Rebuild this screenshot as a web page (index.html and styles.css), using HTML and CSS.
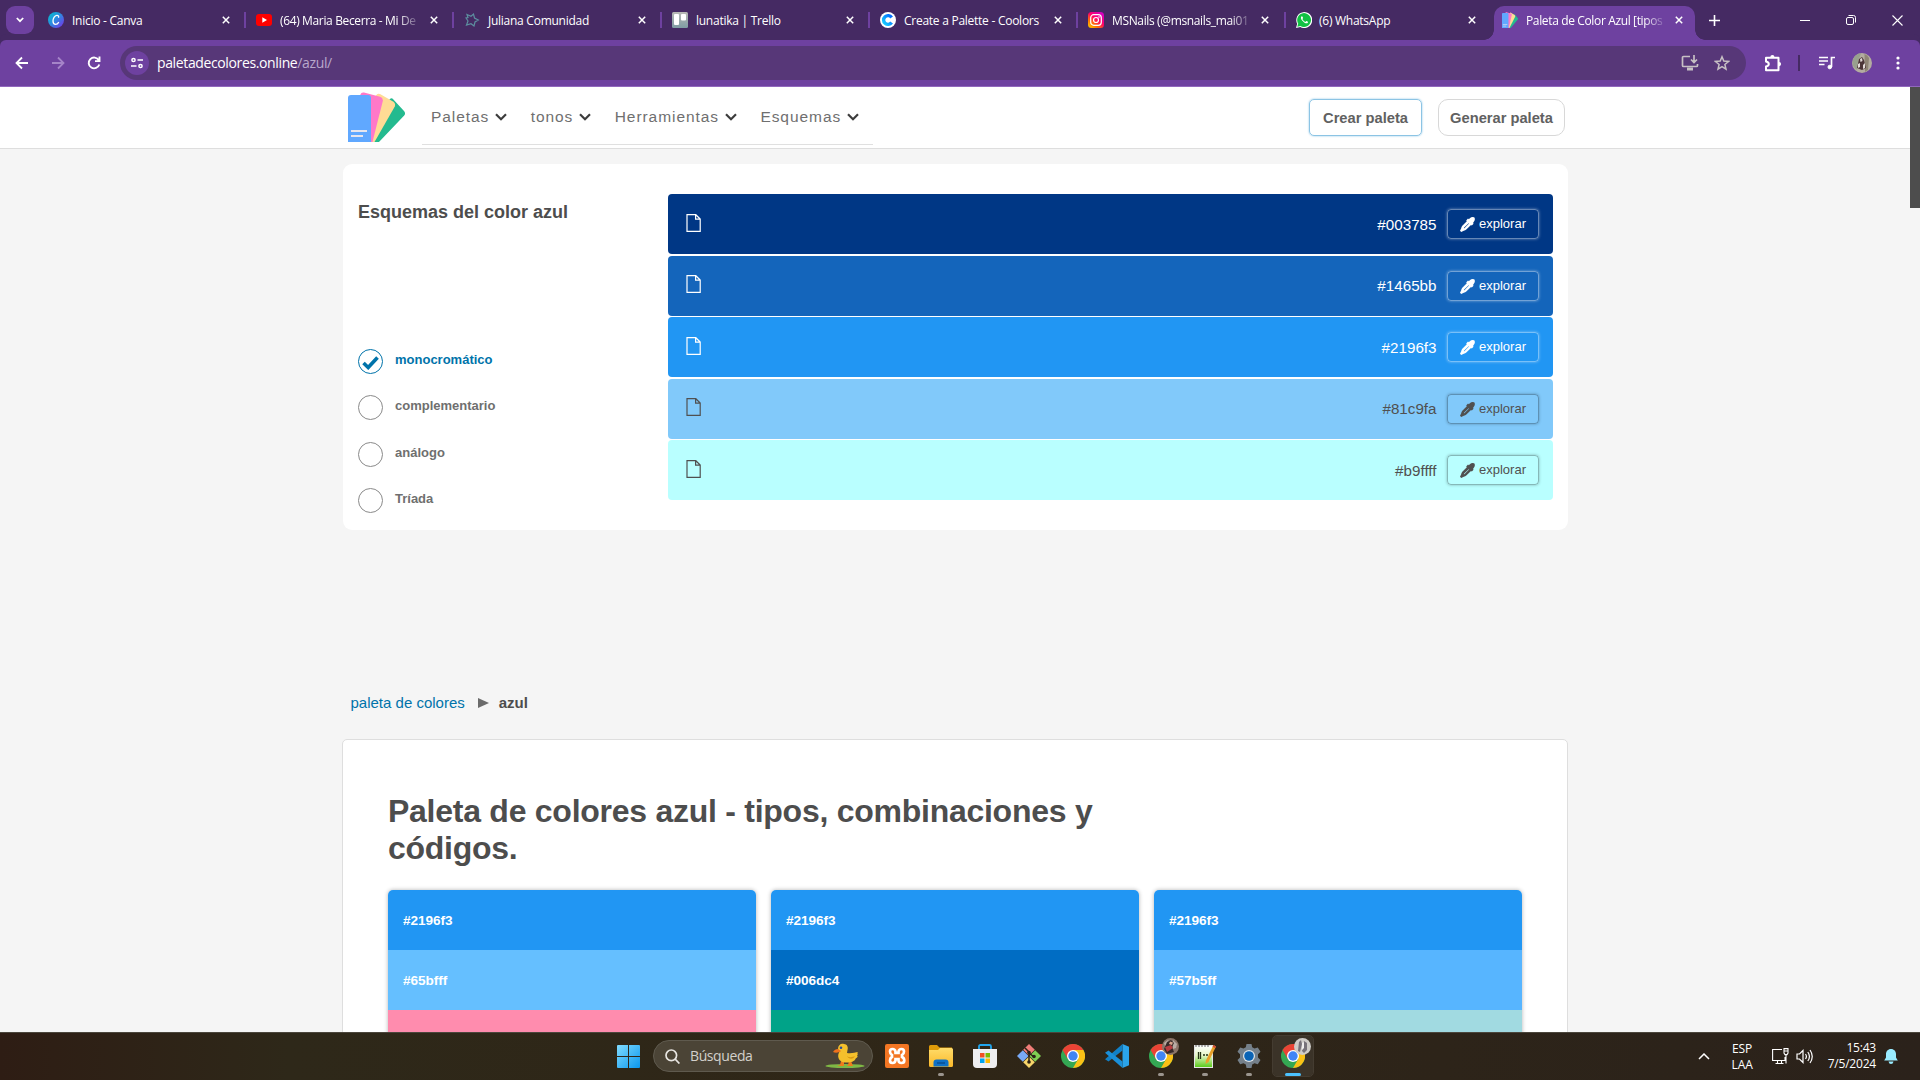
FILE: index.html
```html
<!DOCTYPE html>
<html lang="es">
<head>
<meta charset="utf-8">
<title>Paleta de Color Azul</title>
<link rel="stylesheet" href="styles.css">
</head>
<body>
<svg class="defs" width="0" height="0" aria-hidden="true">
  <linearGradient id="g-canva" x1="0" y1="0" x2="1" y2="1"><stop offset="0" stop-color="#00c4cc"/><stop offset=".45" stop-color="#2a8fe0"/><stop offset="1" stop-color="#7d2ae8"/></linearGradient>
  <linearGradient id="g-insta" x1="0" y1="1" x2=".8" y2="0"><stop offset="0" stop-color="#ffd600"/><stop offset=".3" stop-color="#ff7a00"/><stop offset=".6" stop-color="#ff0169"/><stop offset="1" stop-color="#d300c5"/></linearGradient>
  <linearGradient id="g-cool" x1="0" y1="1" x2="1" y2="0"><stop offset="0" stop-color="#19d0ff"/><stop offset="1" stop-color="#0066ff"/></linearGradient>
  <linearGradient id="g-trello" x1="0" y1="0" x2="0" y2="1"><stop offset="0" stop-color="#b9b9b5"/><stop offset="1" stop-color="#7f9ca4"/></linearGradient>
  <linearGradient id="g-win" x1="0" y1="0" x2="1" y2="1"><stop offset="0" stop-color="#80dcff"/><stop offset="1" stop-color="#0a97ee"/></linearGradient>
  <linearGradient id="g-fold" x1="0" y1="0" x2="0" y2="1"><stop offset="0" stop-color="#ffdc6a"/><stop offset="1" stop-color="#fbb92a"/></linearGradient>
  <linearGradient id="g-note" x1="0" y1="0" x2="0" y2="1"><stop offset="0" stop-color="#fff"/><stop offset=".45" stop-color="#e6f7c8"/><stop offset="1" stop-color="#55c814"/></linearGradient>
  <symbol id="x" viewBox="0 0 8 8"><path d="M.8.8l6.400 6.400M7.200.8L.8 7.200" stroke="#fff" stroke-width="1.500" fill="none"/></symbol>
  <symbol id="fan" viewBox="0 0 57 50">
    <path d="M41 8q2.200-3 4.400-.5l10.600 11.500q2 2.300.2 4.600L31 50h-9z" fill="#24ba8f"/>
    <path d="M28 3.500q1.300-2.700 4-1.400l13 7.400q3 2 1.800 5L26.500 50H22z" fill="#ffdb95"/>
    <path d="M12.500 2.500q.8-2.600 3.500-2l16 4.200q3.300 1 2.800 4.300L24.500 50H18z" fill="#ff78c8"/>
    <path d="M0 6q0-3 3-3h17q3 0 3 3v44H0z" fill="#60a8ff"/>
    <path d="M3 39h16M3 44h12" stroke="#e6e6ee" stroke-width="2"/>
  </symbol>
  <symbol id="chev" viewBox="0 0 12 8"><path d="M1 1.200l5 5 5-5" fill="none" stroke="#3d3d3d" stroke-width="2.200"/></symbol>
  <symbol id="page" viewBox="0 0 15 18"><path d="M1 .7h8.800L14.200 5v12.300H1zM9.600.9v4.300h4.500" fill="none" stroke="currentColor" stroke-width="1.200"/></symbol>
  <symbol id="drop" viewBox="0 0 15 15"><path fill="currentColor" fill-rule="evenodd" d="M9.800 1.300Q11.300 0 13 .1 15 .2 14.900 2q0 1.700-1.200 3l-.7.900.6.900-1.800 1.800-.8-.5L6.300 12.600q-1 .9-2.500 1.200L1.200 15 0 13.800l1.200-2.600Q1.300 9.700 2.300 8.700L6.800 4.200l-.6-.8L8 1.500l.9.700zM8.600 6.200L4.200 10.600q-.3.300-.3.600.4 0 .7-.3L9 6.500z"/></symbol>
  <symbol id="chrome" viewBox="0 0 24 24">
    <circle cx="12" cy="12" r="12" fill="#34a853"/>
    <path d="M12 12L1.600 6A12 12 0 0 1 22.400 6z" fill="#ea4335"/>
    <path d="M12 6h10.400A12 12 0 0 1 12 24l5.200-9z" fill="#fbc116"/>
    <path d="M1.600 6L6.800 15l5.200-9z" fill="#ea4335"/>
    <circle cx="12" cy="12" r="6" fill="#fff"/><circle cx="12" cy="12" r="4.700" fill="#4285f4"/>
  </symbol>
</svg>

<div class="tabstrip">
  <div class="tabsearch"><svg width="8" height="6" viewBox="0 0 8 6"><path d="M.8 1L4 4.200 7.200 1" fill="none" stroke="#fff" stroke-width="1.700"/></svg></div>
  <div class="tabs">
    <div class="tab"><svg class="fav" viewBox="0 0 16 16"><circle cx="8" cy="8" r="8" fill="url(#g-canva)"/><path d="M10.500 5.800c.5-1.600-.4-2.600-1.700-2.500C6.500 3.500 5 6.500 5 9c0 2 1 3.300 2.600 3.300 1.400 0 2.500-1 3.200-2.200" fill="none" stroke="#fff" stroke-width="1.300"/></svg><span class="label">Inicio - Canva</span><svg class="close"><use href="#x"/></svg></div>
    <div class="tab"><svg class="fav" viewBox="0 0 16 16"><rect y="2" width="16" height="12" rx="3" fill="#f00"/><path d="M6.300 5.300L11 8l-4.700 2.700z" fill="#fff"/></svg><span class="label fade">(64) Maria Becerra - Mi De</span><svg class="close"><use href="#x"/></svg></div>
    <div class="tab"><svg class="fav" viewBox="0 0 16 16"><path d="M3 2.500l4 1.700L9.500 2l1 4L14.300 8l-3.300 2-1 4-3-2.300-4.500 1.300L4 9 2 6l2-.5z" fill="none" stroke="#5d8fa0" stroke-width="1.200"/></svg><span class="label">Juliana Comunidad</span><svg class="close"><use href="#x"/></svg></div>
    <div class="tab"><svg class="fav" viewBox="0 0 16 16"><rect width="16" height="16" rx="1.500" fill="url(#g-trello)"/><rect x="2" y="2" width="5" height="11" rx="1" fill="#fff"/><rect x="9" y="2" width="5" height="6.500" rx="1" fill="#fff"/></svg><span class="label">lunatika | Trello</span><svg class="close"><use href="#x"/></svg></div>
    <div class="tab"><svg class="fav" viewBox="0 0 16 16"><circle cx="8" cy="8" r="8" fill="#fff"/><path d="M11.600 5.500A4.400 4.400 0 1 0 11.600 10.500" fill="none" stroke="url(#g-cool)" stroke-width="3.400"/></svg><span class="label">Create a Palette - Coolors</span><svg class="close"><use href="#x"/></svg></div>
    <div class="tab insta"><svg class="fav" viewBox="0 0 16 16"><rect width="16" height="16" rx="3.500" fill="url(#g-insta)"/><rect x="2.700" y="2.700" width="10.600" height="10.600" rx="3" fill="none" stroke="#fff" stroke-width="1.200"/><circle cx="8" cy="8" r="2.500" fill="none" stroke="#fff" stroke-width="1.200"/><circle cx="11" cy="5" r=".8" fill="#fff"/></svg><span class="label fade">MSNails (@msnails_mai01</span><svg class="close"><use href="#x"/></svg></div>
    <div class="tab last"><svg class="fav" viewBox="0 0 16 16"><path d="M0 16l1.200-4.200A8 8 0 1 1 4.300 15z" fill="#fff"/><path d="M1.300 14.700l.9-3.100A6.900 6.900 0 1 1 4.500 13.900z" fill="#12c143"/><path d="M5.700 4.200c-1.200.7-1 2.600.7 4.600s3.700 3 4.900 2.400c.7-.4.900-1.300.7-1.500l-1.700-.8-.9 1C8.200 9.500 7 8.400 6.400 7l.7-.9-.7-1.700z" fill="#fff"/></svg><span class="label">(6) WhatsApp</span><svg class="close"><use href="#x"/></svg></div>
    <div class="tab active"><svg class="fav" viewBox="0 0 57 50" preserveAspectRatio="none"><use href="#fan"/></svg><span class="label fade">Paleta de Color Azul [tipos</span><svg class="close"><use href="#x"/></svg></div>
  </div>
  <svg class="newtab" width="11" height="11" viewBox="0 0 11 11"><path d="M5.500 0v11M0 5.500h11" stroke="#fff" stroke-width="1.600"/></svg>
  <div class="wincontrols">
    <svg width="10" height="10" viewBox="0 0 10 10"><path d="M0 5.500h10" stroke="#fff"/></svg>
    <svg width="10" height="10" viewBox="0 0 10 10" fill="none" stroke="#fff"><rect x=".5" y="2.500" width="7" height="7" rx="1.500"/><path d="M2.500.5h5a2 2 0 0 1 2 2v5"/></svg>
    <svg width="11" height="11" viewBox="0 0 11 11"><path d="M.5.5l10 10M10.500.5l-10 10" stroke="#fff" stroke-width="1.100"/></svg>
  </div>
</div>

<div class="toolbar">
  <div class="navbtns">
    <svg width="14" height="14" viewBox="0 0 14 14" fill="none" stroke="#fff" stroke-width="1.800"><path d="M13 7H1.800M7 1.500L1.500 7 7 12.500"/></svg>
    <svg width="14" height="14" viewBox="0 0 14 14" fill="none" stroke="#a584c8" stroke-width="1.800"><path d="M1 7h11.200M7 1.500L12.500 7 7 12.500"/></svg>
    <svg width="14" height="14" viewBox="0 0 14 14" fill="none" stroke="#fff" stroke-width="1.900"><path d="M11.800 4.200A5.400 5.400 0 1 0 12.300 8.500M12.500.5v4.600H8"/></svg>
  </div>
  <div class="omnibox">
    <span class="siteinfo"><svg width="12" height="12" viewBox="0 0 12 12" fill="none" stroke="#fff" stroke-width="1.500"><circle cx="2.500" cy="3" r="1.600"/><path d="M6.500 3H12M0 9h5.500"/><circle cx="9.500" cy="9" r="1.600"/></svg></span>
    <span class="url">paletadecolores.online<span>/azul/</span></span>
    <svg class="install" width="18" height="16" viewBox="0 0 18 16" fill="none" stroke="#c7c0c4" stroke-width="1.700"><path d="M9 1.500H2.500a1 1 0 0 0-1 1v8a1 1 0 0 0 1 1h13a1 1 0 0 0 1-1V9M13 0v7M10 4.500l3 3 3-3"/><path d="M6 14h6" stroke-width="3"/></svg>
    <svg class="star" width="16" height="16" viewBox="0 0 16 16" fill="none" stroke="#c7c0c4" stroke-width="1.500"><path d="M8 1.800l1.800 4.300 4.700.4-3.600 3 1.100 4.600L8 11.700l-4 2.400 1.100-4.600-3.600-3 4.700-.4z"/></svg>
  </div>
  <div class="tools">
    <svg class="ext" width="18" height="18" viewBox="0 0 18 18"><path d="M2 3.700h12.500v12.600H2v-3.800q2.800-.7 2.800-2.500T2 7.500z" fill="none" stroke="#fff" stroke-width="2" stroke-linejoin="round"/><path d="M6.300 3.200a2.100 2.100 0 0 1 4.200 0zM15 8a2.100 2.100 0 0 1 0 4.200z" fill="#fff"/></svg>
    <i class="bar"></i>
    <svg class="music" width="16" height="14" viewBox="0 0 16 14" fill="none" stroke="#fff" stroke-width="1.700"><path d="M0 1.500h9M0 5h9M0 8.500h5.500M12.500 11V1.500H16"/><circle cx="10.800" cy="11" r="1.800" fill="#fff" stroke-width="1"/></svg>
    <svg class="avatar" width="20" height="20" viewBox="0 0 20 20"><circle cx="10" cy="10" r="10" fill="#b3aca0"/><path d="M3 3q3-3 6-2.600L6 8l-1 9Q-3 11 3 3z" fill="#98a08e"/><path d="M12.500 1q3 1 4.500 4l-1 12-3 2z" fill="#8f8575"/><path d="M7 6l3-2 2 3 2 8-4 2-5-2z" fill="#4c3638"/><path d="M8 6l2-1 .5 3-2 1zM6 11l2-1v4l-2 1zM11 12l2-2 0 5-2 1z" fill="#e3dbd9"/></svg>
    <svg class="dots" width="4" height="14" viewBox="0 0 4 14" fill="#fff"><circle cx="2" cy="2" r="1.600"/><circle cx="2" cy="7" r="1.600"/><circle cx="2" cy="12" r="1.600"/></svg>
  </div>
</div>

<div class="viewport">
  <header class="site">
    <div class="wrap head">
      <svg class="logo" width="57" height="50"><use href="#fan"/></svg>
      <nav>
        <a>Paletas<svg><use href="#chev"/></svg></a>
        <a>tonos<svg><use href="#chev"/></svg></a>
        <a>Herramientas<svg><use href="#chev"/></svg></a>
        <a>Esquemas<svg><use href="#chev"/></svg></a>
      </nav>
      <a class="btn crear">Crear paleta</a>
      <a class="btn generar">Generar paleta</a>
    </div>
  </header>
  <main class="wrap">
    <section class="schemes">
      <div class="side">
        <h2>Esquemas del color azul</h2>
        <ul>
          <li class="on"><i><svg width="17" height="14" viewBox="0 0 17 14"><path d="M1.500 7l4.700 4.500L15.500 1.500" fill="none" stroke="#0073aa" stroke-width="3.600"/></svg></i><span>monocromático</span></li>
          <li><i></i><span>complementario</span></li>
          <li><i></i><span>análogo</span></li>
          <li><i></i><span>Tríada</span></li>
        </ul>
      </div>
      <div class="bars">
        <div class="color c1"><svg class="page"><use href="#page"/></svg><span>#003785</span><a><svg><use href="#drop"/></svg>explorar</a></div>
        <div class="color c2"><svg class="page"><use href="#page"/></svg><span>#1465bb</span><a><svg><use href="#drop"/></svg>explorar</a></div>
        <div class="color c3"><svg class="page"><use href="#page"/></svg><span>#2196f3</span><a><svg><use href="#drop"/></svg>explorar</a></div>
        <div class="color c4 dark"><svg class="page"><use href="#page"/></svg><span>#81c9fa</span><a><svg><use href="#drop"/></svg>explorar</a></div>
        <div class="color c5 dark"><svg class="page"><use href="#page"/></svg><span>#b9ffff</span><a><svg><use href="#drop"/></svg>explorar</a></div>
      </div>
    </section>
    <div class="crumbs"><a>paleta de colores</a><svg width="11" height="10" viewBox="0 0 11 10"><path d="M0 0l11 5-11 5z" fill="#6b6b6b"/></svg><b>azul</b></div>
    <article>
      <h1>Paleta de colores azul - tipos, combinaciones y códigos.</h1>
      <div class="palettes">
        <div class="palette"><div class="p-blue">#2196f3</div><div class="p-sky">#65bfff</div><div class="p-pink"></div></div>
        <div class="palette"><div class="p-blue">#2196f3</div><div class="p-deep">#006dc4</div><div class="p-green"></div></div>
        <div class="palette"><div class="p-blue">#2196f3</div><div class="p-light">#57b5ff</div><div class="p-aqua"></div></div>
      </div>
    </article>
  </main>
  <div class="thumb"></div>
</div>

<footer class="taskbar">
  <div class="apps">
    <svg class="win" width="23" height="23" viewBox="0 0 23 23" fill="url(#g-win)"><path d="M0 1a1 1 0 0 1 1-1h10v11H0zM12 0h10a1 1 0 0 1 1 1v10H12zM0 12h11v11H1a1 1 0 0 1-1-1zM12 12h11v10a1 1 0 0 1-1 1H12z"/></svg>
    <div class="search">
      <svg width="15" height="15" viewBox="0 0 15 15" fill="none" stroke="#e8e6e2" stroke-width="1.700"><circle cx="6.300" cy="6.300" r="5.300"/><path d="M10.200 10.200l4.200 4.300"/></svg>
      <span>Búsqueda</span>
      <svg class="duck" width="40" height="26" viewBox="0 0 40 26"><ellipse cx="20" cy="23" rx="19.500" ry="2" fill="#7fb845"/><path d="M16 18l-1 4-3 1h7v-5zM24 18l-1 4-2 1h7l-2-5z" fill="#ef7c1c"/><path d="M13 6c0-4 3-6 6-5 3 0 4.500 3 3.500 6l-.5 3c5 1 8-1 11-1-1 1-1 1.500 0 2-1 1-1 2-.3 2.500-.7 1-1.200 1.500-2 2-1 3-5 4-9 4-5 0-8-2-8.500-6-.2-3 1-3.500 1-4.500z" fill="#f4c02c"/><path d="M13 6c-2 0-4 1-5 3 2 1 6 1 8-1z" fill="#ee711c"/><circle cx="16" cy="4.800" r="1.300" fill="#2b4d9b"/><path d="M22 13c2 2 6 1 8 0-1 3-6 4-8 0z" fill="#d99913"/></svg>
    </div>
    <div class="app"><svg width="24" height="24" viewBox="0 0 24 24"><rect width="24" height="24" rx="2" fill="#f37623"/><path d="M5 7.500Q5 5 7.500 5t3 2.500V9h3V7.500Q14 5 16.500 5T19 7.500 17 11v2q2.300 1 2.300 3.500T16.500 19t-3-2.500V15h-3v1.500Q10 19 7.500 19T5 16.500 7 13v-2Q5 10 5 7.500z" fill="none" stroke="#fff" stroke-width="2.700"/></svg></div>
    <div class="app"><svg width="24" height="22" viewBox="0 0 24 22"><path d="M0 1.500Q0 0 1.500 0H8l2.500 2.500H23V8H0z" fill="#df9b09"/><path d="M0 5h9l2-2h11.500Q24 3 24 4.500v16q0 1.500-1.500 1.500h-21Q0 22 0 20.500z" fill="url(#g-fold)"/><path d="M4.500 21.500v-4q0-3 3-3h9q3 0 3 3v4z" fill="#0f71c6"/><path d="M8 18h8" stroke="#0a4f92" stroke-width="1.500"/></svg><i class="run"></i></div>
    <div class="app"><svg width="24" height="24" viewBox="0 0 24 24"><path d="M6 6V2.500Q6 1 7.500 1h9Q18 1 18 2.500V6" fill="none" stroke="#21a6ee" stroke-width="1.800"/><path d="M0 5h24v15q0 4-4 4H4q-4 0-4-4z" fill="#eeeef0"/><path fill="#f25022" d="M7 9h4.500v4.500H7z"/><path fill="#7fba00" d="M12.500 9H17v4.500h-4.500z"/><path fill="#00a4ef" d="M7 14.500h4.500V19H7z"/><path fill="#ffb900" d="M12.500 14.500H17V19h-4.500z"/></svg></div>
    <div class="app"><svg width="24" height="24" viewBox="0 0 24 24"><path d="M12 0l5.800 5.800-5.800 5.800-5.800-5.800z" fill="#f07d78"/><path d="M5.800 6.200l5.800 5.800-5.800 5.800L0 12z" fill="#79a9f5"/><path d="M18.200 6.200L24 12l-5.800 5.800-5.800-5.800z" fill="#7fce53"/><path d="M12 12.400l5.800 5.800L12 24l-5.800-5.800z" fill="#f7d56a"/><path d="M8 4l4 4v11M12 9l5 4" fill="none" stroke="#2a2016" stroke-width="1.500"/><circle cx="12" cy="8.500" r="1.800" fill="#2a2016"/><circle cx="12" cy="18" r="1.800" fill="#2a2016"/><circle cx="17" cy="12.500" r="1.800" fill="#2a2016"/></svg></div>
    <div class="app"><svg width="24" height="24"><use href="#chrome"/></svg></div>
    <div class="app"><svg width="24" height="24" viewBox="0 0 24 24"><path d="M17.500 0L24 2.800v18.400L17.500 24z" fill="#2ba4ea"/><path d="M17.500 0v6.500L3.500 17.500 0 15.200z" fill="#1180c6"/><path d="M17.500 24v-6.500L3.500 6.500 0 8.800z" fill="#1a8fd8"/></svg></div>
    <div class="app"><svg width="24" height="24"><use href="#chrome"/></svg><svg class="badge" width="17" height="17" viewBox="0 0 17 17"><circle cx="8.500" cy="8.500" r="8.500" fill="#8a7468"/><path d="M11 2l4 4-1 4-3 1zM2 5l4-3 2 3-5 3z" fill="#b9ada4"/><path d="M5 4l4-2 3 3-2 4 2 5-7 2-3-5z" fill="#372a29"/><path d="M3 9l6-2 2 3-6 4z" fill="#b83d40"/><path d="M8 3.500l3 1-1 2.500-3-1z" fill="#d9a58c"/></svg><i class="run"></i></div>
    <div class="app"><svg width="24" height="24" viewBox="0 0 24 24"><rect x="1.500" y="1.500" width="18" height="22" fill="url(#g-note)" stroke="#e4e4e4"/><path d="M3 1v2M6 1v2M9 1v2M12 1v2M15 1v2" stroke="#666"/><path d="M5.500 8v7M7.500 8v7M10 11h2M13 11h2" stroke="#263516" stroke-width="1.300"/><path d="M20.500 1l2.500 1.500L15.500 18l-3 2 .5-3.800z" fill="#e8a02a"/><path d="M20.500 1l2.500 1.500-.8 1.700-2.500-1.500z" fill="#d34b3a"/></svg><i class="run"></i></div>
    <div class="app"><svg width="24" height="24" viewBox="0 0 24 24"><path d="M9.500 0h5l.7 3.300 2.300 1.200L20.800 3.500l2.700 4.300-2.500 2.400v3.300l2.500 2.500-2.700 4.300-3.300-1-2.300 1.300-.7 3.400h-5l-.7-3.400-2.300-1.300-3.300 1L.5 16 3 13.500v-3.300L.5 7.800l2.700-4.300 3.300 1 2.300-1.200z" fill="#75808a"/><circle cx="12" cy="12" r="6" fill="#dfe5ea"/><circle cx="12" cy="12" r="4.800" fill="#0a63b5"/></svg><i class="run"></i></div>
    <div class="app current"><svg width="24" height="24"><use href="#chrome"/></svg><svg class="badge" width="17" height="17" viewBox="0 0 17 17"><circle cx="8.500" cy="8.500" r="8.500" fill="#cfccc8"/><path d="M5 4l2-2 1 4-2 8-2-1zM10 3l3 2v7l-3 3-2-2z" fill="#77727a"/><path d="M8 5l2-1 0 6-2 2z" fill="#f0eeee"/></svg><i class="run"></i></div>
  </div>
  <div class="tray">
    <svg width="12" height="7" viewBox="0 0 12 7"><path d="M1 6l5-5 5 5" fill="none" stroke="#fff" stroke-width="1.500"/></svg>
    <div class="lang">ESP<br>LAA</div>
    <svg class="net" width="17" height="17" viewBox="0 0 17 17" fill="none" stroke="#fff" stroke-width="1.100"><path d="M10 1.500H.6v11H13V9M3.500 15.500h8M5.500 12.500v3M9.500 12.500v3M12 .6h4v4.500l-1 1.500h-2L12 5zM12 3h4M14 6.500v9"/></svg>
    <svg class="vol" width="17" height="15" viewBox="0 0 17 15" fill="none" stroke="#fff" stroke-width="1.200"><path d="M1 5h2.500L7 1.500v12L3.500 10H1zM9.500 5q1.800 2.500 0 5M11.800 3q3.300 4.500 0 9M14 1q4.500 6.500 0 13"/></svg>
    <div class="clock">15:43<br>7/5/2024</div>
    <svg class="bell" width="14" height="15" viewBox="0 0 14 15" fill="#99ebff"><path d="M7 0C3.800 0 2 2.500 2 5v3.500L.2 11.500h13.600L12 8.500V5c0-2.500-1.800-5-5-5zM4.500 12.500h5Q9 15 7 15t-2.500-2.500z"/></svg>
  </div>
</footer>
</body>
</html>
```
FILE: styles.css
```css
* { box-sizing: border-box; }
body {
  margin: 0; width: 1920px; height: 1080px; overflow: hidden;
  display: flex; flex-direction: column;
  font-family: "Liberation Sans", Arial, sans-serif; color: #4d4d4d;
}
svg { display: block; flex: none; }
.defs { position: absolute; }

/* browser tab strip */
.tabstrip {
  height: 40px; flex: none; background: #452a63; display: flex; align-items: center;
  padding-left: 6px; font: 12px/16px "Open Sans", "Noto Sans", sans-serif; color: #fff;
}
.tabsearch { width: 28px; height: 28px; border-radius: 9px; background: #6e41a0; display: flex; align-items: center; justify-content: center; }
.tabs { display: flex; align-self: stretch; margin-left: 6px; }
.tab { width: 208px; display: flex; align-items: center; padding-left: 8px; position: relative; }
.tab::after { content: ""; position: absolute; right: 2px; top: 12px; width: 2px; height: 16px; background: #6e41a0; }
.tab.last { width: 206px; }
.tab.last::after, .tab.active::after { display: none; }
.fav { width: 16px; height: 16px; }
.label { width: 140px; margin-left: 8px; padding-top: 2px; white-space: nowrap; letter-spacing: -.26px; }
.fade { letter-spacing: -.36px; -webkit-mask-image: linear-gradient(90deg, #000 118px, rgba(0,0,0,.15) 138px); }
.insta .label { width: 139px; }
.last .label { width: 139px; margin-left: 7px; }
.close { width: 8px; height: 8px; margin-left: 10px; }
.tab.active { width: 201px; margin-top: 6px; padding-bottom: 6px; background: #6e41a0; border-radius: 10px 10px 0 0; }
.active .label { width: 139px; }
.tab.active::before {
  content: ""; position: absolute; left: -10px; right: -10px; bottom: 0; height: 10px;
  background: radial-gradient(circle at 0 0, transparent 9.500px, #6e41a0 10px) left / 10px 10px no-repeat,
    radial-gradient(circle at 100% 0, transparent 9.500px, #6e41a0 10px) right / 10px 10px no-repeat;
}
.newtab { margin-left: 14px; }
.wincontrols { margin-left: auto; display: flex; align-items: center; gap: 36px; padding-right: 17px; }

/* browser toolbar */
.toolbar {
  height: 47px; flex: none; background: #6e41a0; border-bottom: 1px solid #9168bd;
  display: flex; align-items: center; box-shadow: 0 -6px 0 #452a63; border-radius: 6px 6px 0 0;
}
.navbtns { display: flex; gap: 22px; padding-left: 15px; width: 120px; }
.omnibox { width: 1626px; height: 34px; border-radius: 17px; background: #573778; display: flex; align-items: center; padding-left: 5px; }
.siteinfo { width: 24px; height: 24px; border-radius: 50%; background: #6e41a0; display: flex; align-items: center; justify-content: center; }
.url { margin-left: 8px; font: 14px/20px "Open Sans", "Noto Sans", sans-serif; letter-spacing: -.37px; color: #fff; }
.url span { color: #b9a8cb; }
.install { margin-left: auto; }
.star { margin: 0 16px 0 15px; }
.tools { display: flex; align-items: center; }
.ext { margin-left: 18px; }
.bar { width: 2px; height: 16px; background: #452a63; margin: 0 19px 0 16px; }
.avatar { margin: 0 24px 0 17px; }

/* page */
.viewport { height: 945px; flex: none; overflow: hidden; background: #f5f5f5; position: relative; padding-right: 10px; }
.thumb { position: absolute; right: 0; top: 0; width: 10px; height: 121px; background: #4d4d4d; }
.wrap { width: 1226px; margin: 0 auto; }
.site { height: 62px; background: #fff; border-bottom: 1px solid #dedede; }
.head { display: flex; align-items: flex-start; padding-left: 6px; }
.logo { margin-top: 5px; }
nav { display: flex; width: 451px; height: 58px; margin-left: 17px; padding: 0 0 0 9px; border-bottom: 1px solid #e0e0e0; gap: 23.900px; }
nav a { display: flex; align-items: center; font-size: 15.500px; letter-spacing: .940px; color: #6f6f6f; padding-bottom: 4px; height: 66px; margin-top: -1px; }
nav svg { width: 12px; height: 8px; margin: -1px 0 0 5.500px; }
.btn { height: 37px; margin-top: 12px; display: flex; align-items: center; justify-content: center; font-size: 14.700px; font-weight: bold; color: #616161; padding-top: 1px; }
.crear { width: 113px; margin-left: auto; border: 1px solid #8cc4e4; border-radius: 5px; box-shadow: 0 0 2px #7fbfe5; }
.generar { width: 127px; margin: 12px 3px 0 16px; border: 1px solid #d8d8d8; border-radius: 10px; }

.schemes { margin: 15px 0 0 1px; width: 1225px; height: 366px; background: #fff; border-radius: 9px; padding: 30px 15px; display: flex; }
.side { width: 310px; flex: none; }
.side h2 { margin: 8px 0 119px; font-size: 18px; line-height: 21px; }
.side ul { list-style: none; margin: 0; padding: 7px 0 0; display: grid; gap: 21.400px; }
.side li { display: flex; height: 25px; gap: 12px; font-size: 13px; font-weight: bold; line-height: 22px; color: #6f6f6f; }
.side i { width: 25px; height: 25px; border: 1px solid #8a8a8a; border-radius: 50%; display: flex; align-items: center; justify-content: center; }
.side .on { color: #0073aa; }
.side .on i { border-color: #0073aa; padding-top: 2px; }
.bars { width: 885px; flex: none; display: flex; flex-direction: column; gap: 1.500px; }
.color { height: 60px; border-radius: 4px; color: #fff; display: flex; align-items: center; padding: 0 14px 0 18px; font-size: 15.200px; }
.page { width: 15px; height: 18px; margin-top: -3px; }
.color span { margin-left: auto; }
.color a {
  width: 92px; height: 30px; margin-left: 10.500px; border: 1px solid rgba(255,255,255,.4); border-radius: 4px; padding-bottom: 1px;
  box-shadow: 0 0 3px rgba(255,255,255,.45); display: flex; align-items: center; justify-content: center; gap: 4px; font-size: 13px;
}
.color a svg { width: 15px; height: 15px; margin-top: 2px; }
.dark { color: #505050; }
.dark a { border-color: rgba(0,0,0,.28); box-shadow: 0 0 3px rgba(0,0,0,.3); }
.c1 { background: #003785; } .c2 { background: #1465bb; } .c3 { background: #2196f3; }
.c4 { background: #81c9fa; } .c5 { background: #b9ffff; }

.crumbs { display: flex; align-items: center; height: 20px; margin: 162px 0 27px 8.500px; font-size: 15px; }
.crumbs a { color: #0073aa; }
.crumbs svg { margin: 1px 10px 0 13px; }
article { height: 400px; background: #fff; border: 1px solid #dedede; border-radius: 5px; padding: 53px 45px 0; }
h1 { margin: 0 0 23px; width: 760px; font-size: 32px; line-height: 37px; letter-spacing: -.26px; }
.palettes { display: grid; grid-template-columns: repeat(3, 368px); gap: 15px; }
.palette { border-radius: 5px; overflow: hidden; box-shadow: 0 0 4px rgba(0,0,0,.3); color: #fff; font-size: 13.600px; font-weight: bold; letter-spacing: -.05px; }
.palette div { height: 60px; line-height: 61px; padding-left: 15px; }
.p-blue { background: #2196f3; } .p-sky { background: #65bfff; } .p-pink { background: #ff8cae; }
.p-deep { background: #006dc4; } .p-green { background: #00a388; }
.p-light { background: #57b5ff; } .p-aqua { background: #a1dae1; }

/* taskbar */
.taskbar {
  height: 48px; flex: none; display: flex; justify-content: space-between; border-top: 1px solid #4b463c;
  background: linear-gradient(90deg, #2e1d14, #2e2819 15%, #2f2617 50%, #2b221b);
  font: 12px/16px "Open Sans", "Noto Sans", sans-serif; color: #fff;
}
.apps { display: flex; align-items: center; padding: 0 0 1px 617px; }
.search { width: 220px; height: 32px; margin: 0 2px 0 13px; border-radius: 16px; border: 1px solid #5f5a4e; background: #4b4436; display: flex; align-items: center; padding: 0 7px 0 11px; font-size: 14px; color: #d3d0cb; }
.search span { margin-left: 10px; letter-spacing: -.4px; }
.duck { margin-left: auto; }
.app { width: 40px; height: 40px; margin: 0 2px; display: flex; align-items: center; justify-content: center; position: relative; border-radius: 4px; }
.run { position: absolute; bottom: 0; left: 17px; width: 6px; height: 3px; border-radius: 2px; background: #9b958e; }
.badge { position: absolute; left: 21px; top: 2px; }
.current { background: #3b3328; outline: 1px solid #443c31; }
.current .run { width: 16px; left: 12px; background: #4cc2ff; }
.tray { display: flex; align-items: center; padding: 0 22px 1px 0; }
.lang { text-align: center; margin: 1px 19px 0 21px; letter-spacing: -.1px; }
.vol { margin: 0 15px 0 7px; }
.clock { text-align: right; letter-spacing: -.2px; }
.bell { margin-left: 8px; }
```
